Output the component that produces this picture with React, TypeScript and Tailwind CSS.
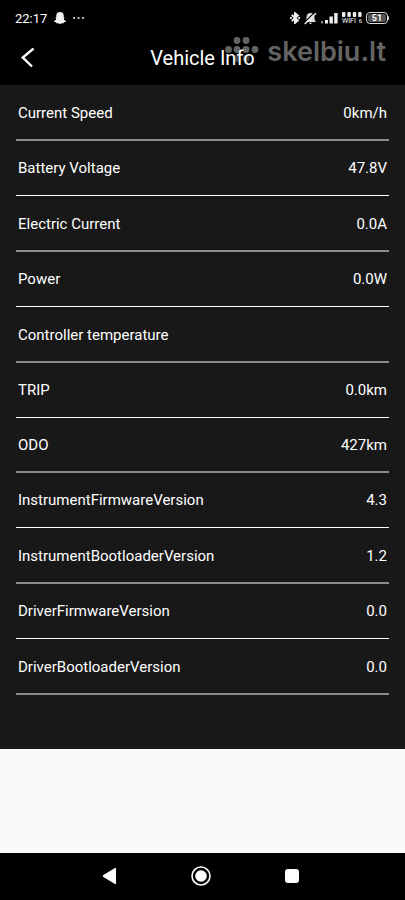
const rows = [
  { label: 'Current Speed', value: '0km/h', line: 'h-14 pt-[2px] border-b-2 border-[#8b8b8b]' },
  { label: 'Battery Voltage', value: '47.8V', line: 'h-[55px] border-b border-white' },
  { label: 'Electric Current', value: '0.0A', line: 'h-14 pt-[2px] border-b-2 border-[#8b8b8b]' },
  { label: 'Power', value: '0.0W', line: 'h-[55px] border-b border-white' },
  { label: 'Controller temperature', value: '', line: 'h-14 pt-[2px] border-b-2 border-[#8b8b8b]' },
  { label: 'TRIP', value: '0.0km', line: 'h-[55px] border-b border-white' },
  { label: 'ODO', value: '427km', line: 'h-[55px] pt-[2px] border-b-2 border-[#8b8b8b]' },
  { label: 'InstrumentFirmwareVersion', value: '4.3', line: 'h-[55px] border-b border-white' },
  { label: 'InstrumentBootloaderVersion', value: '1.2', line: 'h-14 pt-[2px] border-b-2 border-[#8b8b8b]' },
  { label: 'DriverFirmwareVersion', value: '0.0', line: 'h-[55px] border-b border-white' },
  { label: 'DriverBootloaderVersion', value: '0.0', line: 'h-14 pt-[2px] border-b-2 border-[#8b8b8b]' },
];

const StatusBar = () => (
  <div className="flex h-9 items-center justify-between pl-[15px] pr-4">
    <div className="flex items-center gap-[7px]">
      <span className="text-[13px] leading-none">22:17</span>
      <svg width="12" height="12" viewBox="0 0 12 12" fill="#eee">
        <path d="M6 0C8.4 0 9.7 1.5 9.7 3.3V5L10.6 5.2L9.8 6.4C10.2 7.8 10.8 8.5 12 9L11.7 9.9L10 10.3L9.6 11.2H8L6 12L4 11.2H2.4L2 10.3L.3 9.9L0 9C1.2 8.5 1.8 7.8 2.2 6.4L1.4 5.2L2.3 5V3.3C2.3 1.5 3.6 0 6 0Z" />
      </svg>
      <svg width="12" height="4" viewBox="0 0 12 4" fill="#ddd">
        <circle cx="1.2" cy="2" r="1.1" />
        <circle cx="5.6" cy="2" r="1.1" />
        <circle cx="10" cy="2" r="1.1" />
      </svg>
    </div>
    <div className="flex items-center gap-1">
      <svg width="10" height="12" viewBox="0 0 10 12" fill="none" stroke="#eee" strokeWidth="2">
        <path d="M1.8 3L7.8 8.4L5 10.8V1.2L7.8 3.6L1.8 9" />
        <path d="M0 6H1.8M8.2 6H10" />
      </svg>
      <svg width="13" height="13" viewBox="0 0 14 13">
        <path d="M7 .5C9.8 .5 11.3 2.5 11.3 5V7.6L12.8 10.2H1.2L2.7 7.6V5C2.7 2.5 4.2 .5 7 .5ZM5 11H9L7 12.8Z" fill="#ddd" />
        <path d="M0 11.2L11.8 -.4" stroke="#000" strokeWidth="1.2" />
        <path d="M.8 12.4L13 .8" stroke="#eee" strokeWidth="1.6" />
      </svg>
      <svg width="17" height="11" viewBox="0 0 17 11" fill="#eee">
        <rect x="0" y="8" width="2" height="2.5" fill="#888" />
        <rect x="4" y="7" width="3" height="3.5" />
        <rect x="8.5" y="3.5" width="3.4" height="7" />
        <rect x="13.2" y="0" width="3.4" height="10.5" />
      </svg>
      <div className="flex flex-col gap-px">
        <svg width="20" height="5" viewBox="0 0 20 5" fill="#eee">
          <rect x="0" width="3.4" height="5" rx="1" />
          <rect x="5.4" width="3.4" height="5" rx="1" />
          <rect x="10.8" width="3.4" height="5" rx="1" />
          <rect x="16.2" width="3.4" height="5" rx="1" />
        </svg>
        <span className="flex h-[7px] w-5 items-center justify-between text-[7px] leading-none">
          WIFI <span className="text-[6px]">6</span>
        </span>
      </div>
      <div className="flex items-center">
        <div className="flex h-3 w-[22px] items-center justify-center rounded-[4px] border border-[#ddd] p-px">
          <span className="flex h-full w-full items-center justify-center rounded-xs bg-[#555] text-[9px] leading-none font-bold">51</span>
        </div>
        <div className="h-1 w-px rounded-r-sm bg-[#ddd]" />
      </div>
    </div>
  </div>
);

const Watermark = () => (
  <div className="pointer-events-none absolute top-9 right-[19px] flex items-start gap-2 text-[#646464]">
    <svg width="34" height="34" viewBox="0 0 34 34" fill="currentColor">
      <circle cx="12" cy="4.5" r="3.4" />
      <circle cx="21" cy="4.5" r="3.4" />
      <circle cx="3.5" cy="13.5" r="3.4" />
      <circle cx="12" cy="13.5" r="3.4" />
      <circle cx="21" cy="13.5" r="3.4" />
      <circle cx="30" cy="13.5" r="3.4" />
      <circle cx="12" cy="22.5" r="3.4" fill="#444" />
      <circle cx="21" cy="22.5" r="3.4" fill="#444" />
    </svg>
    <span className="font-['Inter',sans-serif] text-[27px] leading-8 font-semibold">skelbiu.lt</span>
  </div>
);

const App = () => {
  return (
    <div className="flex min-h-screen flex-col bg-[#fafafa] font-['Roboto',sans-serif] text-white">
      <header className="relative h-[85px] bg-black">
        <StatusBar />
        <Watermark />
        <div className="relative flex h-11 items-center justify-center">
          <button type="button" aria-label="Back" className="absolute left-5">
            <svg width="16" height="20" viewBox="0 0 16 20" fill="none" stroke="#fff" strokeWidth="2.4">
              <path d="M13.5 .5L2.8 9.5L12 18.5" />
            </svg>
          </button>
          <h1 className="text-xl leading-6">Vehicle Info</h1>
        </div>
      </header>

      <main className="bg-[#181818] px-4 pb-[54px]">
        <dl>
          {rows.map((row) => (
            <div key={row.label} className={`flex items-center justify-between px-[2px] text-[15px] ${row.line}`}>
              <dt>{row.label}</dt>
              <dd>{row.value}</dd>
            </div>
          ))}
        </dl>
      </main>

      {/* Android navigation */}
      <nav className="mt-auto flex h-[47px] items-center justify-between bg-black pr-[106px] pb-px pl-[102px]">
        <button type="button" aria-label="Back">
          <svg width="14" height="18" viewBox="0 0 14 18" fill="#fff">
            <path d="M14 1.5V16.5Q14 17.5 13 17L1.4 10Q0 9 1.4 8L13 1Q14 .5 14 1.5Z" />
          </svg>
        </button>
        <button type="button" aria-label="Home">
          <svg width="20" height="20" viewBox="0 0 20 20">
            <circle cx="10" cy="10" r="9" fill="none" stroke="#fff" strokeWidth="1.6" />
            <circle cx="10" cy="10" r="5.8" fill="#fff" />
          </svg>
        </button>
        <button type="button" aria-label="Recent apps" className="size-[14px] rounded-[3px] bg-white" />
      </nav>
    </div>
  );
};

export default App;
